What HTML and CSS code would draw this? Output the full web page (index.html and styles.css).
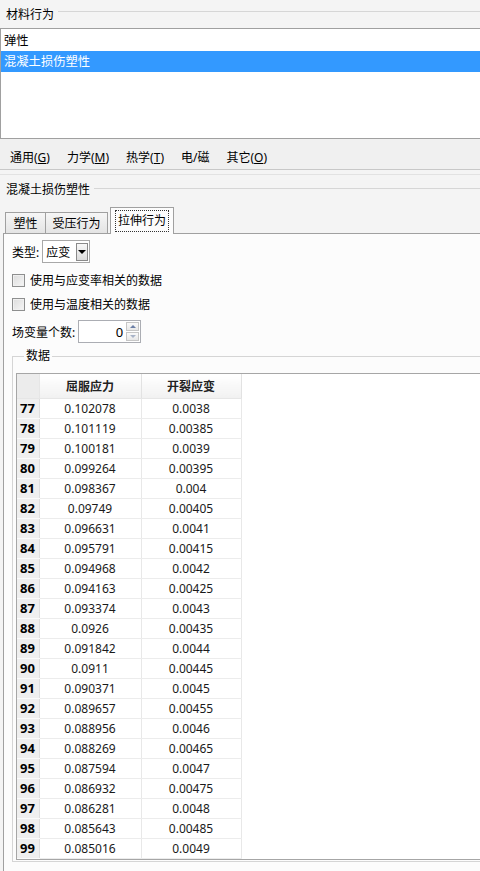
FILE: index.html
```html
<!DOCTYPE html>
<html>
<head>
<meta charset="utf-8">
<link rel="stylesheet" href="styles.css">
</head>
<body>
<div class="ghead"><span class="glbl">材料行为</span><span class="gline"></span></div>
<div class="list">
  <div class="item">弹性</div>
  <div class="item sel">混凝土损伤塑性</div>
</div>
<div class="menu">
  <span>通用(<u>G</u>)</span>
  <span>力学(<u>M</u>)</span>
  <span>热学(<u>T</u>)</span>
  <span>电/磁</span>
  <span>其它(<u>O</u>)</span>
</div>
<div class="sep"></div>
<div class="ghead g2"><span class="glbl">混凝土损伤塑性</span><span class="gline"></span></div>
<div class="tabs">
  <div class="tab t1">塑性</div>
  <div class="tab t2">受压行为</div>
  <div class="tab act"><span class="focus">拉伸行为</span></div>
</div>
<div class="panel">
  <div class="row r-type">
    <span>类型:</span>
    <div class="combo"><span class="ctext">应变</span><span class="cbtn"><span class="tri"></span></span></div>
  </div>
  <div class="row r-chk"><span class="chk"></span><span>使用与应变率相关的数据</span></div>
  <div class="row r-chk"><span class="chk"></span><span>使用与温度相关的数据</span></div>
  <div class="row r-spin">
    <span>场变量个数:</span>
    <div class="spin"><span class="sval">0</span><span class="sbtns"><span class="sb up"><span class="stri"></span></span><span class="sb dn"><span class="stri"></span></span></span></div>
  </div>
  <fieldset class="dgroup">
    <legend>数据</legend>
    <div class="grid">
      <table>
        <thead>
          <tr><th class="rn"></th><th class="c1">屈服应力</th><th class="c2">开裂应变</th><th class="fill"></th></tr>
        </thead>
        <tbody>
          <tr><td class="rn">77</td><td>0.102078</td><td>0.0038</td><td class="fill"></td></tr>
          <tr><td class="rn">78</td><td>0.101119</td><td>0.00385</td><td class="fill"></td></tr>
          <tr><td class="rn">79</td><td>0.100181</td><td>0.0039</td><td class="fill"></td></tr>
          <tr><td class="rn">80</td><td>0.099264</td><td>0.00395</td><td class="fill"></td></tr>
          <tr><td class="rn">81</td><td>0.098367</td><td>0.004</td><td class="fill"></td></tr>
          <tr><td class="rn">82</td><td>0.09749</td><td>0.00405</td><td class="fill"></td></tr>
          <tr><td class="rn">83</td><td>0.096631</td><td>0.0041</td><td class="fill"></td></tr>
          <tr><td class="rn">84</td><td>0.095791</td><td>0.00415</td><td class="fill"></td></tr>
          <tr><td class="rn">85</td><td>0.094968</td><td>0.0042</td><td class="fill"></td></tr>
          <tr><td class="rn">86</td><td>0.094163</td><td>0.00425</td><td class="fill"></td></tr>
          <tr><td class="rn">87</td><td>0.093374</td><td>0.0043</td><td class="fill"></td></tr>
          <tr><td class="rn">88</td><td>0.0926</td><td>0.00435</td><td class="fill"></td></tr>
          <tr><td class="rn">89</td><td>0.091842</td><td>0.0044</td><td class="fill"></td></tr>
          <tr><td class="rn">90</td><td>0.0911</td><td>0.00445</td><td class="fill"></td></tr>
          <tr><td class="rn">91</td><td>0.090371</td><td>0.0045</td><td class="fill"></td></tr>
          <tr><td class="rn">92</td><td>0.089657</td><td>0.00455</td><td class="fill"></td></tr>
          <tr><td class="rn">93</td><td>0.088956</td><td>0.0046</td><td class="fill"></td></tr>
          <tr><td class="rn">94</td><td>0.088269</td><td>0.00465</td><td class="fill"></td></tr>
          <tr><td class="rn">95</td><td>0.087594</td><td>0.0047</td><td class="fill"></td></tr>
          <tr><td class="rn">96</td><td>0.086932</td><td>0.00475</td><td class="fill"></td></tr>
          <tr><td class="rn">97</td><td>0.086281</td><td>0.0048</td><td class="fill"></td></tr>
          <tr><td class="rn">98</td><td>0.085643</td><td>0.00485</td><td class="fill"></td></tr>
          <tr><td class="rn">99</td><td>0.085016</td><td>0.0049</td><td class="fill"></td></tr>
        </tbody>
      </table>
    </div>
  </fieldset>
</div>
</body>
</html>
```
FILE: styles.css
```css
* { box-sizing: border-box; margin: 0; padding: 0; }
html, body { width: 480px; height: 871px; overflow: hidden; }
body {
  background: #f4f4f4;
  font-family: "Noto Sans", "Noto Sans CJK SC", sans-serif;
  font-size: 12px;
  color: #000;
}
.ghead { display: flex; align-items: flex-start; height: 28px; padding-left: 6px; }
.glbl { line-height: 14px; margin-top: 8px; }
.gline { flex: 1; height: 1px; background: #d6d6d6; margin-top: 11px; margin-left: 4px; }
.list {
  height: 111px;
  background: #fff;
  border-top: 1px solid #a0a0a0;
  border-left: 1px solid #a0a0a0;
  border-bottom: 1px solid #a0a0a0;
  padding-top: 2px;
}
.item { height: 20px; line-height: 20px; padding-left: 3px; font-size: 12.3px; }
.item.sel { height: 21px; line-height: 21px; background: #3399ff; color: #fff; }
.menu {
  height: 31px;
  background: #f0f0f0;
  border-bottom: 1px solid #c8c8c8;
  display: flex;
  align-items: center;
  padding: 6px 0 0 10px;
  gap: 17px;
}
.menu u { text-decoration: underline; text-underline-offset: 1px; }
.sep { margin-top: 4px; height: 1px; background: #e2e2e2; }
.ghead.g2 { height: 32px; }
.g2 .glbl { margin-top: 8px; }
.g2 .gline { margin-top: 13px; }
.tabs { display: flex; align-items: flex-end; height: 26px; padding-left: 5px; position: relative; z-index: 1; }
.tab {
  height: 21px;
  border: 1px solid #a0a0a0;
  border-bottom: none;
  background: linear-gradient(#f6f6f6, #e4e4e4);
  display: flex; align-items: center; justify-content: center;
}
.t1 { width: 41px; }
.t2 { width: 63px; margin-left: -1px; }
.tab.act {
  width: 64px; height: 27px; margin-left: 2px; margin-bottom: -1px;
  background: #fcfcfc;
}
.focus { border: 1px dotted #333; padding: 2px 2px; line-height: 16px; margin-top: -1px; }
.panel {
  margin-left: 3px;
  height: 638px;
  background: #fcfcfc;
  border-top: 1px solid #a0a0a0;
  border-left: 1px solid #a0a0a0;
  padding: 6px 0 0 8px;
}
.row { display: flex; align-items: center; }
.r-type { height: 23px; }
.combo {
  margin-left: 3px; width: 48px; height: 23px;
  border: 1px solid #a8a8a8; background: #fff;
  display: flex; align-items: center;
}
.ctext { padding-left: 3px; flex: 1; }
.cbtn {
  width: 12px; height: 18px; margin-right: 1px;
  border: 1px solid #8a8a8a;
  background: linear-gradient(#f8f8f8, #dcdcdc);
  display: flex; align-items: center; justify-content: center;
}
.tri { width: 0; height: 0; border-left: 4px solid transparent; border-right: 4px solid transparent; border-top: 4px solid #000; }
.r-chk { height: 24px; }
.r-type + .r-chk { margin-top: 5px; }
.chk {
  width: 13px; height: 13px; margin-right: 5px;
  border: 1px solid #8e8f8f;
  background: linear-gradient(135deg, #dcdcdc, #f6f6f6);
  box-shadow: inset 0 0 0 1px #f0f0f0;
}
.r-spin { height: 23px; margin-top: 4px; }
.spin {
  margin-left: 3px; width: 63px; height: 23px;
  border: 1px solid #abadb3; background: #fff;
  display: flex; align-items: center;
}
.sval { flex: 1; text-align: right; padding-right: 3px; font-size: 13px; }
.sbtns { display: flex; flex-direction: column; gap: 1px; margin-right: 1px; }
.sb {
  width: 13px; height: 9px;
  border: 1px solid #c6c6c6;
  background: linear-gradient(#fafafa, #e8e8e8);
  display: flex; align-items: center; justify-content: center;
}
.stri { width: 0; height: 0; border-left: 3px solid transparent; border-right: 3px solid transparent; }
.up .stri { border-bottom: 3px solid #6b7fa6; }
.dn .stri { border-top: 3px solid #a9b4c8; }
.dgroup {
  margin-top: 6px;
  border: 1px solid #d5d5d5;
  border-right: none;
  padding: 10px 0 1px 3px;
  min-width: 0;
}
.dgroup legend { margin-left: 8px; padding: 0 2px; line-height: 14px; }
.grid {
  height: 487px;
  background: #fff;
  border: 1px solid #a6a6a6;
  border-right: none;
  overflow: hidden;
}
table { border-collapse: collapse; width: 100%; table-layout: fixed; }
th, td { padding: 0; white-space: nowrap; }
th {
  height: 24px;
  background: linear-gradient(#ffffff, #f1f1f1);
  border-right: 1px solid #e2e2e2;
  border-bottom: 1px solid #e6e6e6;
  font-weight: 600;
  color: #222;
}
th.rn { width: 22px; background: #ececec; border-right: 1px solid #e6e6e6; }
th.c1 { width: 102px; }
th.c2 { width: 100px; }
th.fill { background: #fff; border-right: none; border-bottom: none; }
td {
  height: 20px;
  text-align: center;
  border-right: 1px solid #e8e8e8;
  border-bottom: 1px solid #ececec;
  color: #1a1a1a;
}
td.rn {
  text-align: left; padding-left: 3px;
  font-weight: bold;
  font-size: 13px;
  background: #efefef;
  border-bottom: 1px solid #fbfbfb;
  border-right: 1px solid #dedede;
  color: #000;
}
td.fill { border: none; }
```
